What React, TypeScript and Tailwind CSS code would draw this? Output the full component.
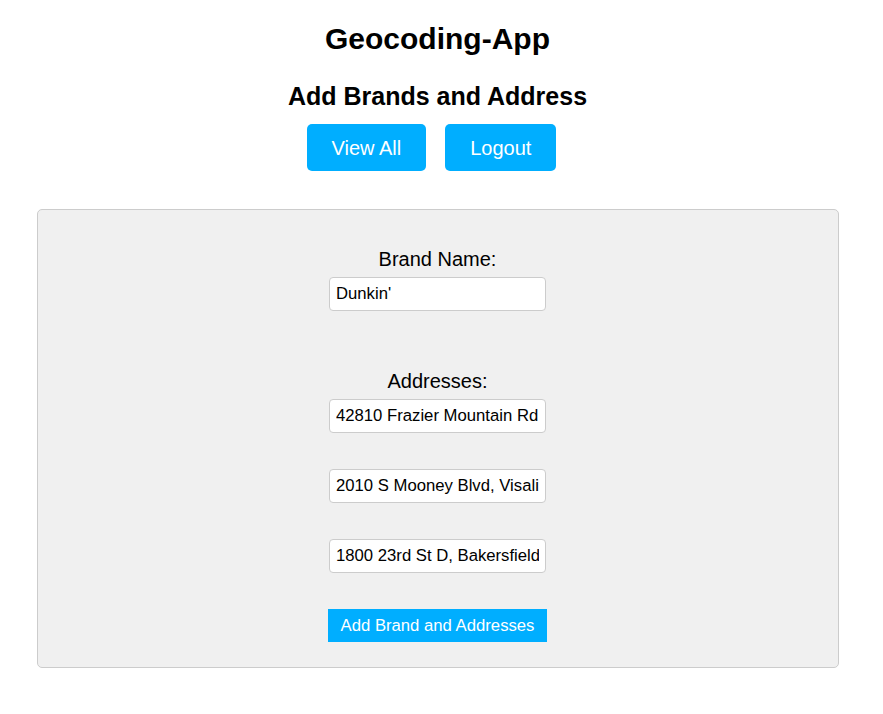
const addresses = [
  '42810 Frazier Mountain Rd',
  '2010 S Mooney Blvd, Visali',
  '1800 23rd St D, Bakersfield',
]

function TextField({ value }: { value: string }) {
  return (
    <input
      type="text"
      readOnly
      value={value}
      className="block h-[34px] w-[217px] rounded-[4px] border border-[#ccc] bg-white px-[6px] text-[16.7px] text-black outline-none"
    />
  )
}

export default function App() {
  return (
    <div className="min-h-[714px] w-[875px] bg-white font-['Liberation_Sans',Arial,sans-serif] text-black">
      {/* Header */}
      <h1 className="pt-[22px] text-center text-[30px] font-bold leading-[34px]">Geocoding-App</h1>
      <h2 className="mt-[26px] text-center text-[25px] font-bold leading-[29px]">
        Add Brands and Address
      </h2>
      <div className="mt-[13px] flex justify-center gap-[19px] pr-[12px]">
        <button className="h-[47px] rounded-[5px] bg-[#00aeff] px-[25px] text-[20px] text-white">
          View All
        </button>
        <button className="h-[47px] rounded-[5px] bg-[#00aeff] px-[25px] text-[20px] text-white">
          Logout
        </button>
      </div>

      {/* Form panel */}
      <div className="mx-auto mt-[38px] flex w-[802px] flex-col items-center rounded-[5px] border border-[#ccc] bg-[#f0f0f0] pt-[38px] pb-[25px]">
        <label className="text-[20px] leading-[23px]">Brand Name:</label>
        <div className="mt-[6px]">
          <TextField value="Dunkin'" />
        </div>

        <label className="mt-[59px] text-[20px] leading-[23px]">Addresses:</label>
        <div className="mt-[6px] flex flex-col gap-[36px]">
          {addresses.map((a) => (
            <TextField key={a} value={a} />
          ))}
        </div>

        <button className="mt-[36px] h-[33px] w-[219px] bg-[#00aeff] text-[16.7px] text-white">
          Add Brand and Addresses
        </button>
      </div>
    </div>
  )
}
